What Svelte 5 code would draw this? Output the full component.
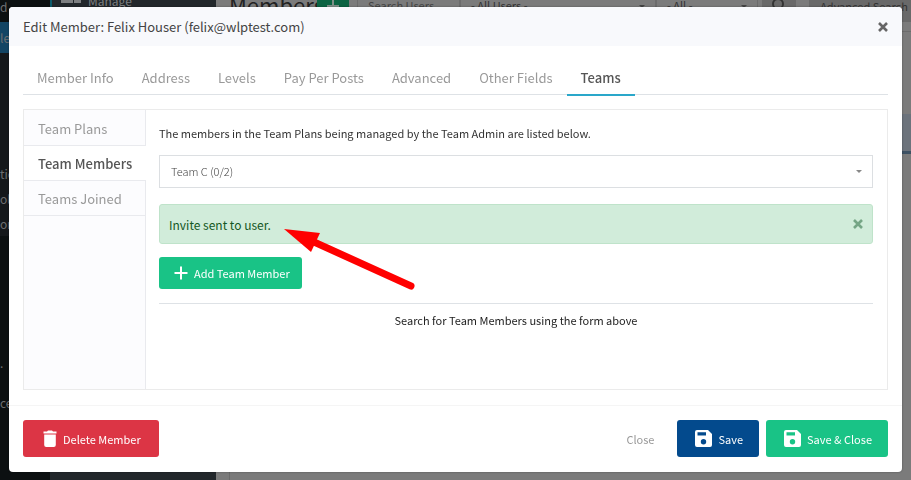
<script>
	let tabs = ['Member Info', 'Address', 'Levels', 'Pay Per Posts', 'Advanced', 'Other Fields', 'Teams'];
	let sections = ['Team Plans', 'Team Members', 'Teams Joined'];
	let adminItems = ['d', 'le', '', '', 'tio', 'ol', 'or', '', '', '', '.', 'ce'];

	let activeTab = 'Teams';
	let activeSection = 'Team Members';
	let showNotice = true;
</script>

<svelte:head>
	<title>Edit Member</title>
</svelte:head>

<div class="page">
	<nav class="admin-menu">
		{#each adminItems as item, i}
			<span class="item-{i}">{item}</span>
		{/each}
	</nav>
	<aside class="plugin-menu">
		<a href="#manage">
			<svg width="20" height="16" viewBox="0 0 20 16" fill="currentColor">
				<path d="M0 0h12v6H0zM0 6h12v5H0zM13 0h7v5h-7zM13 6h7v5h-7z" />
			</svg>
			Manage
		</a>
	</aside>
	<main>
		<header class="toolbar">
			<h1>Members</h1>
			<button class="add" aria-label="Add member">
				<svg width="12" height="12" viewBox="0 0 12 12" stroke="currentColor" stroke-width="2">
					<path d="M6 0v12M0 6h12" />
				</svg>
			</button>
			<input class="search" type="text" placeholder="Search Users" aria-label="Search users" />
			<div class="filter users">
				<select aria-label="User filter"><option>- All Users -</option></select>
			</div>
			<div class="filter levels">
				<select aria-label="Level filter"><option>- All -</option></select>
			</div>
			<button class="find" aria-label="Search">
				<svg width="16" height="18" viewBox="0 0 16 18" fill="none" stroke="currentColor" stroke-width="2">
					<circle cx="7" cy="7" r="5" />
					<path d="M11 11l4 5" />
				</svg>
			</button>
			<button class="advanced">Advanced Search</button>
		</header>
		<div class="list"><div class="list-head"></div></div>
	</main>
</div>

<div class="backdrop">
	<div class="modal" role="dialog" aria-modal="true" aria-labelledby="modal-title">
		<div class="modal-header">
			<h2 id="modal-title">Edit Member: Felix Houser (felix@wlptest.com)</h2>
			<button class="close" aria-label="Close dialog">
				<svg width="10" height="10" viewBox="0 0 10 10" stroke="currentColor" stroke-width="2.6">
					<path d="M1 1l8 8M9 1L1 9" />
				</svg>
			</button>
		</div>

		<div class="modal-body">
			<div class="tabs" role="tablist">
				{#each tabs as tab}
					<button role="tab" aria-selected={activeTab === tab} class:active={activeTab === tab} on:click={() => (activeTab = tab)}>
						{tab}
					</button>
				{/each}
			</div>

			<div class="panel">
				<div class="sections">
					{#each sections as section}
						<button class:active={activeSection === section} on:click={() => (activeSection = section)}>
							{section}
						</button>
					{/each}
				</div>

				<div class="content">
					<p class="intro">The members in the Team Plans being managed by the Team Admin are listed below.</p>

					<div class="select">
						<select aria-label="Team">
							<option>Team C (0/2)</option>
						</select>
					</div>

					{#if showNotice}
						<div class="notice" role="alert">
							<span>Invite sent to user.</span>
							<button class="close" aria-label="Dismiss" on:click={() => (showNotice = false)}>
								<svg width="10" height="10" viewBox="0 0 10 10" stroke="currentColor" stroke-width="2.6">
									<path d="M1 1l8 8M9 1L1 9" />
								</svg>
							</button>
							<svg class="arrow" width="132" height="64" viewBox="0 0 132 64">
								<path d="M30 14L127 58" stroke="#f00" stroke-width="7" stroke-linecap="round" />
								<path d="M0 1L36 5L27 24z" fill="#f00" />
							</svg>
						</div>
					{/if}

					<button class="btn green small">
						<svg width="14" height="14" viewBox="0 0 14 14" stroke="currentColor" stroke-width="2">
							<path d="M7 0.5v13M0.5 7h13" />
						</svg>
						Add Team Member
					</button>

					<p class="hint">Search for Team Members using the form above</p>
				</div>
			</div>
		</div>

		<div class="modal-footer">
			<button class="btn red">
				<svg width="14" height="18" viewBox="0 0 14 18" fill="currentColor">
					<path d="M1.2 4.5h11.600V15a2 2 0 0 1-2 2H3.200a2 2 0 0 1-2-2zM0.500 1.500h3.500l1-1h4l1 1h3.500v2H0.500z" />
				</svg>
				Delete Member
			</button>
			<div class="actions">
				<button class="link">Close</button>
				<button class="btn blue">
					<svg width="17" height="17" viewBox="0 0 17 17" fill="currentColor" fill-rule="evenodd">
						<path d="M2 0h11l4 4v11a2 2 0 0 1-2 2H2a2 2 0 0 1-2-2V2a2 2 0 0 1 2-2zM2.500 2.200v3.300h8.500V2.200zM8.500 9a2.700 2.700 0 1 0 0 5.400a2.700 2.700 0 0 0 0-5.400z" />
					</svg>
					Save
				</button>
				<button class="btn green">
					<svg width="17" height="17" viewBox="0 0 17 17" fill="currentColor" fill-rule="evenodd">
						<path d="M2 0h11l4 4v11a2 2 0 0 1-2 2H2a2 2 0 0 1-2-2V2a2 2 0 0 1 2-2zM2.500 2.200v3.300h8.500V2.200zM8.500 9a2.700 2.700 0 1 0 0 5.400a2.700 2.700 0 0 0 0-5.400z" />
					</svg>
					Save &amp; Close
				</button>
			</div>
		</div>
	</div>
</div>

<style>
	:global(body) {
		background: #7b7b7b;
		font-family: "Noto Sans CJK SC", "Open Sans", sans-serif;
		font-size: 11px;
		overflow: hidden;
	}

	* {
		box-sizing: border-box;
	}

	button,
	select,
	input {
		font: inherit;
		margin: 0;
	}

	button {
		cursor: pointer;
		border: none;
		background: none;
		padding: 0;
	}

	h1,
	h2,
	p {
		margin: 0;
		font-weight: 400;
	}

	.page {
		display: flex;
		height: 100vh;
		overflow: hidden;
	}

	.admin-menu {
		width: 50px;
		background: #0c1011;
		color: #6c6e70;
		display: flex;
		flex-direction: column;
		flex: none;
		font-size: 12px;
	}

	.admin-menu span {
		height: 25px;
		line-height: 25px;
		white-space: nowrap;
	}

	.admin-menu .item-0 {
		height: 22px;
		line-height: 14px;
	}

	.admin-menu .item-1 {
		height: 31px;
		line-height: 31px;
		background: #134564;
	}

	.admin-menu .item-2,
	.admin-menu .item-3 {
		height: 54px;
	}

	.admin-menu .item-2,
	.admin-menu .item-3,
	.admin-menu .item-4,
	.admin-menu .item-5,
	.admin-menu .item-6 {
		background: #15181b;
	}

	.admin-menu .item-7,
	.admin-menu .item-8,
	.admin-menu .item-9 {
		height: 38px;
	}

	.admin-menu .item-10 {
		height: 40px;
	}

	.plugin-menu {
		width: 166px;
		background: #22272b;
		flex: none;
	}

	.plugin-menu a {
		display: flex;
		gap: 7px;
		margin-top: -8px;
		padding-left: 9px;
		border-left: 2px solid #0c5a6a;
		color: #7d7f81;
		font-size: 12px;
		line-height: 18px;
		text-decoration: none;
	}

	main {
		flex: 1;
		min-width: 0;
	}

	.toolbar {
		display: flex;
		height: 32px;
		margin-top: -10px;
		padding-left: 13px;
		color: #333;
		white-space: nowrap;
	}

	.toolbar h1 {
		width: 88px;
		font-size: 22px;
		line-height: 28px;
		color: #222;
		flex: none;
	}

	.toolbar button {
		display: flex;
		align-items: center;
		justify-content: center;
		color: inherit;
		flex: none;
	}

	.toolbar .add {
		width: 32px;
		background: #0c6443;
		color: #7f8f88;
	}

	.toolbar input,
	.toolbar select {
		width: 100%;
		height: 32px;
		padding: 0 10px 2px;
		appearance: none;
		background: #7b7b7b;
		color: inherit;
		border: 1px solid #6c6c6c;
		border-radius: 0;
	}

	.toolbar .search {
		width: 103px;
		margin-left: 8px;
		flex: none;
	}

	.toolbar .search::placeholder {
		color: #444;
	}

	.toolbar .users {
		width: 196px;
	}

	.toolbar .levels {
		width: 102px;
	}

	.toolbar .find {
		width: 34px;
		margin-left: 4px;
		background: #696969;
	}

	.toolbar .advanced {
		width: 110px;
		margin-left: 13px;
		background: #696969;
	}

	.list {
		margin: 9px 0 0 13px;
		height: 450px;
		border: 1px solid #6c6c6c;
		border-right: none;
		padding-top: 82px;
	}

	.list-head {
		height: 40px;
		background: #6c737c;
		border-bottom: 3px solid #3d5163;
	}

	.filter,
	.select {
		position: relative;
		flex: none;
	}

	.filter::after,
	.select::after {
		content: "";
		position: absolute;
		right: 11px;
		top: 15px;
		border: 3px solid transparent;
		border-top-color: #888;
		border-bottom: none;
	}

	.filter::after {
		border-top-color: #444;
	}

	.backdrop {
		position: fixed;
		inset: 0;
		padding: 7px 9px;
	}

	.modal {
		width: 100%;
		max-width: 893px;
		background: #fff;
		border-radius: 4px;
		box-shadow: 0 0 2px rgba(0, 0, 0, 0.4);
		overflow: hidden;
	}

	.modal-header {
		display: flex;
		align-items: center;
		justify-content: space-between;
		height: 39px;
		padding: 0 14px;
		background: #f8f9fc;
	}

	.modal-header h2 {
		font-size: 13px;
		color: #444;
	}

	.close {
		display: flex;
		color: #666;
	}

	.modal-body {
		padding: 14px 14px 15px;
	}

	.tabs {
		display: flex;
		height: 35px;
		border-bottom: 1px solid #dee2e6;
	}

	.tabs button {
		height: 36px;
		padding: 0 14px;
		border-bottom: 2px solid transparent;
		color: #999;
		font-size: 13px;
	}

	.tabs button.active {
		color: #555;
		font-weight: 500;
		border-color: #2aa7ca;
	}

	.panel {
		display: flex;
		min-height: 281px;
		margin-top: 14px;
		border: 1px solid #ebebeb;
	}

	.sections {
		width: 122px;
		padding-top: 1px;
		background: #fcfcfe;
		border-right: 1px solid #e9eaee;
		flex: none;
	}

	.sections button {
		display: block;
		width: 100%;
		height: 35px;
		padding: 0 14px;
		border-bottom: 1px solid #e9eaee;
		color: #999;
		font-size: 13px;
		text-align: left;
		white-space: nowrap;
	}

	.sections button.active {
		width: 122px;
		background: #fff;
		color: #555;
		font-weight: 500;
	}

	.content {
		flex: 1;
		padding: 13px 14px 13px 13px;
	}

	.intro {
		line-height: 20px;
		color: #333;
	}

	.select {
		margin: 12px 0 16px;
	}

	.select select {
		display: block;
		width: 100%;
		height: 33px;
		padding: 0 11px 2px;
		appearance: none;
		background: #fff;
		border: 1px solid #dcdfe2;
		border-radius: 0;
		color: #444;
		font-weight: 300;
	}

	.notice {
		position: relative;
		display: flex;
		align-items: center;
		justify-content: space-between;
		height: 40px;
		margin-bottom: 13px;
		padding: 0 9px;
		background: #d1ecda;
		border: 1px solid #bfe3ca;
		border-radius: 3px;
		color: #155724;
		font-size: 12px;
	}

	.notice .close {
		color: #75a585;
	}

	.arrow {
		position: absolute;
		left: 124px;
		top: 23px;
	}

	.btn {
		display: flex;
		align-items: center;
		gap: 6px;
		height: 37px;
		padding: 0 16px 0 18px;
		border-radius: 3px;
		color: #fff;
		white-space: nowrap;
	}

	.btn.small {
		height: 32px;
		padding: 0 12px 0 15px;
	}

	.green {
		background: #19c386;
	}

	.red {
		padding: 0 18px 0 20px;
		background: #dc3545;
	}

	.blue {
		background: #034a8d;
	}

	.hint {
		margin-top: 14px;
		padding-top: 6px;
		border-top: 1px solid #dee2e6;
		color: #222;
		line-height: 20px;
		text-align: center;
	}

	.modal-footer {
		display: flex;
		justify-content: space-between;
		padding: 14px 14px 15px;
		border-top: 1px solid #f5f5f5;
	}

	.actions {
		display: flex;
		gap: 7px;
	}

	.link {
		padding: 0 16px;
		color: #999;
	}
</style>
